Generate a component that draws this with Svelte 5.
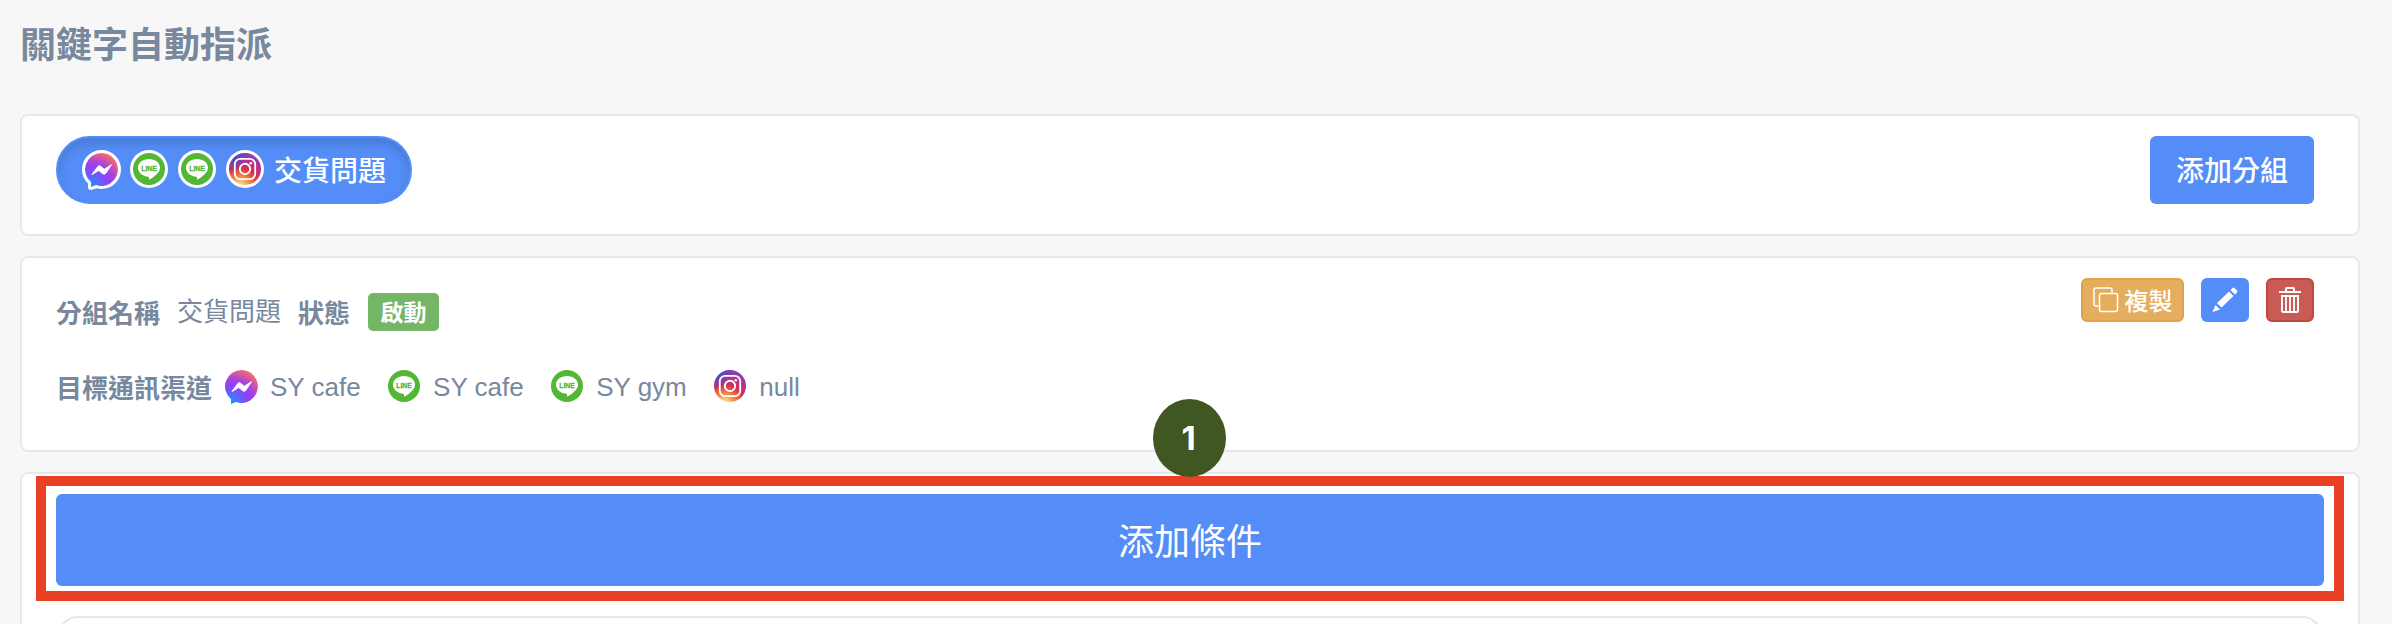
<script>
  const groupIcons = ['messenger', 'line', 'line', 'instagram'];
  const channels = [
    { type: 'messenger', name: 'SY cafe' },
    { type: 'line', name: 'SY cafe' },
    { type: 'line', name: 'SY gym' },
    { type: 'instagram', name: 'null' }
  ];
</script>

{#snippet icon(type, ringed)}
  <svg class="icon {type}" class:ringed viewBox={ringed ? '-3 -3 38 40' : '0 0 32 34'}>
    {#if type === 'messenger'}
      {#if ringed}
        <g fill="#fff" stroke="#fff" stroke-width="6" stroke-linejoin="round">
          <circle cx="16.500" cy="16.500" r="16.500" />
          <path d="M6 24V34L15 31Z" />
        </g>
      {/if}
      <path d="M16.500 0A16.500 16.500 0 1 1 11 32.100L6 34V29.200A16.500 16.500 0 0 1 16.500 0Z" fill="url(#messenger-fill)" />
      <path d="M7 21.500 12.800 13.500Q14 12 15.500 13.200L19.200 16.300 26.500 11.700 20.800 20.300Q19.400 22 17.900 20.800L13.700 17.500Z" fill="#fff" stroke="#fff" stroke-width="1" stroke-linejoin="round" />
    {:else if type === 'line'}
      {#if ringed}<circle cx="16" cy="16" r="19" fill="#fff" />{/if}
      <circle cx="16" cy="16" r="16" fill="#53b635" />
      <path d="M16 6C22.200 6 27 9.900 27 14.800C27 19.500 21.500 23.800 16.500 26.600C15.800 26.800 16 25.500 16 23.900C9.500 23.600 5 19.500 5 14.800C5 9.900 9.800 6 16 6Z" fill="#fff" />
      <text x="16" y="18" text-anchor="middle" textLength="15.500" lengthAdjust="spacingAndGlyphs">LINE</text>
    {:else}
      {#if ringed}<circle cx="16" cy="16" r="19" fill="#fff" />{/if}
      <circle cx="16" cy="16" r="16" fill="url(#insta-fill)" />
      <circle cx="16" cy="16" r="16" fill="url(#insta-blue)" />
      <rect x="5.800" y="5.800" width="20.400" height="20.400" rx="5.500" fill="none" stroke="#fff" stroke-width="1.800" />
      <circle cx="16" cy="16" r="5.200" fill="none" stroke="#fff" stroke-width="1.900" />
      <circle cx="21.800" cy="10.200" r="1.300" fill="#fff" />
    {/if}
  </svg>
{/snippet}

<svg class="defs" width="0" height="0">
  <defs>
    <radialGradient id="messenger-fill" gradientUnits="userSpaceOnUse" cx="6" cy="33" r="36">
      <stop offset="0" stop-color="#0b9cff" />
      <stop offset=".2" stop-color="#4d70ff" />
      <stop offset=".5" stop-color="#9140fa" />
      <stop offset=".68" stop-color="#a844de" />
      <stop offset="1" stop-color="#ff6a67" />
    </radialGradient>
    <radialGradient id="insta-fill" gradientUnits="userSpaceOnUse" cx="11" cy="34" r="32">
      <stop offset="0" stop-color="#ffdc80" />
      <stop offset=".15" stop-color="#fbc578" />
      <stop offset=".4" stop-color="#ee7138" />
      <stop offset=".6" stop-color="#d6304f" />
      <stop offset=".85" stop-color="#b73095" />
      <stop offset="1" stop-color="#943aa8" />
    </radialGradient>
    <radialGradient id="insta-blue" gradientUnits="userSpaceOnUse" cx="3" cy="2" r="18">
      <stop offset="0" stop-color="#3c5ad0" />
      <stop offset=".5" stop-color="#5b45bc" stop-opacity=".7" />
      <stop offset="1" stop-color="#7b3cb0" stop-opacity="0" />
    </radialGradient>
  </defs>
</svg>

<main>
  <h1>關鍵字自動指派</h1>

  <section class="card groups">
    <button class="pill">
      {#each groupIcons as type}{@render icon(type, true)}{/each}
      <span>交貨問題</span>
    </button>
    <button class="add-group">添加分組</button>
  </section>

  <section class="card details">
    <div class="info">
      <div class="row status-row">
        <strong>分組名稱</strong>
        <span class="group-name">交貨問題</span>
        <strong>狀態</strong>
        <span class="status">啟動</span>
      </div>
      <div class="row channels">
        <strong>目標通訊渠道</strong>
        {#each channels as channel}
          <span class="channel">{@render icon(channel.type, false)}<span>{channel.name}</span></span>
        {/each}
      </div>
    </div>
    <div class="actions">
      <button class="copy">
        <svg width="26" height="26" viewBox="0 0 26 26" fill="none" stroke="#fff" stroke-width="1.500">
          <path d="M19 5.500V3Q19 1 17 1H3Q1 1 1 3V17Q1 19 3 19H5.500" />
          <rect x="6.500" y="6.500" width="18" height="18" rx="2" />
        </svg>
        <span>複製</span>
      </button>
      <button class="edit" aria-label="編輯">
        <svg width="26" height="26" viewBox="0 0 26 26" fill="#fff">
          <path d="M17 4.500 21.500 9 9.500 20.500 5 16ZM18.500 3 20.500 1Q21.500 .2 22.500 1L25 3.500Q25.600 4.500 25 5.500L23 7.500ZM3.500 18 8 22.500 .5 25Z" />
        </svg>
      </button>
      <button class="remove" aria-label="刪除">
        <svg width="22" height="26" viewBox="0 0 22 26" fill="none" stroke="#fff" stroke-width="2">
          <path d="M0 5H22M7 4.500V2Q7 1 8 1H14Q15 1 15 2V4.500M3 8V23.500Q3 25 4.500 25H17.500Q19 25 19 23.500V8M2 9H20" />
          <path d="M7 9V24M11 9V24M15 9V24" stroke-width="1.800" />
        </svg>
      </button>
    </div>
  </section>

  <section class="card conditions">
    <div class="highlight">
      <button class="add-condition">添加條件</button>
      <span class="step">1</span>
    </div>
    <div class="condition"></div>
  </section>
</main>

<style>
  :global(body) { background: #f7f7f7; overflow: hidden; }
  * { box-sizing: border-box; }
  .defs { position: absolute; }
  main {
    height: 624px;
    overflow: hidden;
    padding: 0 32px 0 20px;
    color: #78889e;
    font-family: "Liberation Sans", "Noto Sans CJK TC", sans-serif;
    font-size: 26px;
  }
  h1 { margin: 0; height: 114px; padding-top: 22px; font-size: 36px; line-height: 48px; font-weight: 700; }
  button { display: flex; align-items: center; justify-content: center; margin: 0; padding: 0; border: 0; border-radius: 6px; color: #fff; font: inherit; background: #548df7; }
  .card { background: #fff; border: 2px solid #e7e8ee; border-radius: 8px; }
  .groups { height: 122px; display: flex; justify-content: space-between; align-items: flex-start; padding: 20px 44px 0 34px; margin-bottom: 20px; }
  .pill { width: 356px; height: 68px; gap: 10px; border-radius: 34px; font-size: 28px; font-weight: 500; border: 2px solid #548df7; box-shadow: inset 0 6px 10px rgba(0, 0, 0, .13); }
  .pill span { padding-bottom: 2px; }
  .icon { display: block; flex: none; width: 32px; height: 34px; overflow: visible; }
  .icon.ringed { width: 38px; height: 40px; }
  .icon text { font-family: "Liberation Sans", sans-serif; font-size: 8px; font-weight: 700; fill: #53b635; stroke: #53b635; stroke-width: .3; }
  .add-group { width: 164px; height: 68px; padding-bottom: 2px; font-size: 28px; font-weight: 500; }
  .details { height: 196px; display: flex; justify-content: space-between; padding: 20px 44px 0 34px; margin-bottom: 20px; }
  .info { padding-top: 15px; }
  .row { display: flex; align-items: center; height: 38px; }
  .row strong { padding-bottom: 2px; }
  .status-row { gap: 17px; }
  .group-name { padding-bottom: 6px; }
  .status { display: flex; align-items: center; justify-content: center; width: 71px; height: 38px; margin-left: 1px; padding-bottom: 2px; border-radius: 5px; background: #74b566; color: #fff; font-size: 23px; font-weight: 700; }
  .channels { margin-top: 37px; gap: 27.500px; }
  .channels > strong { margin-right: -14.500px; }
  .channel { display: flex; align-items: center; gap: 13px; }
  .actions { display: flex; gap: 17px; }
  .actions button { width: 48px; height: 44px; }
  .actions .copy { width: 103px; gap: 6px; background: #e5ae5e; border: 2px solid #e1a14a; font-size: 24px; font-weight: 500; }
  .copy span { padding-bottom: 2px; }
  .actions .remove { background: #c85b55; border: 2px solid #c04840; }
  .conditions { height: 180px; padding: 2px 14px 0; border-bottom: 0; border-radius: 8px 8px 0 0; }
  .highlight { position: relative; height: 125px; padding: 8px 10px 0; border: 10px solid #ea4025; }
  .add-condition { width: 100%; height: 92px; padding-bottom: 3px; font-size: 36px; }
  .step { position: absolute; left: 1107px; top: -87px; width: 73px; height: 78px; padding-right: 2px; border-radius: 50%; background: #405723; color: #fff; display: flex; align-items: center; justify-content: center; font-family: Inter, sans-serif; font-size: 33px; font-weight: 700; }
  .condition { height: 60px; margin: 15px 22px 0; border: 2px solid #e7e7e7; border-radius: 20px; }
</style>
